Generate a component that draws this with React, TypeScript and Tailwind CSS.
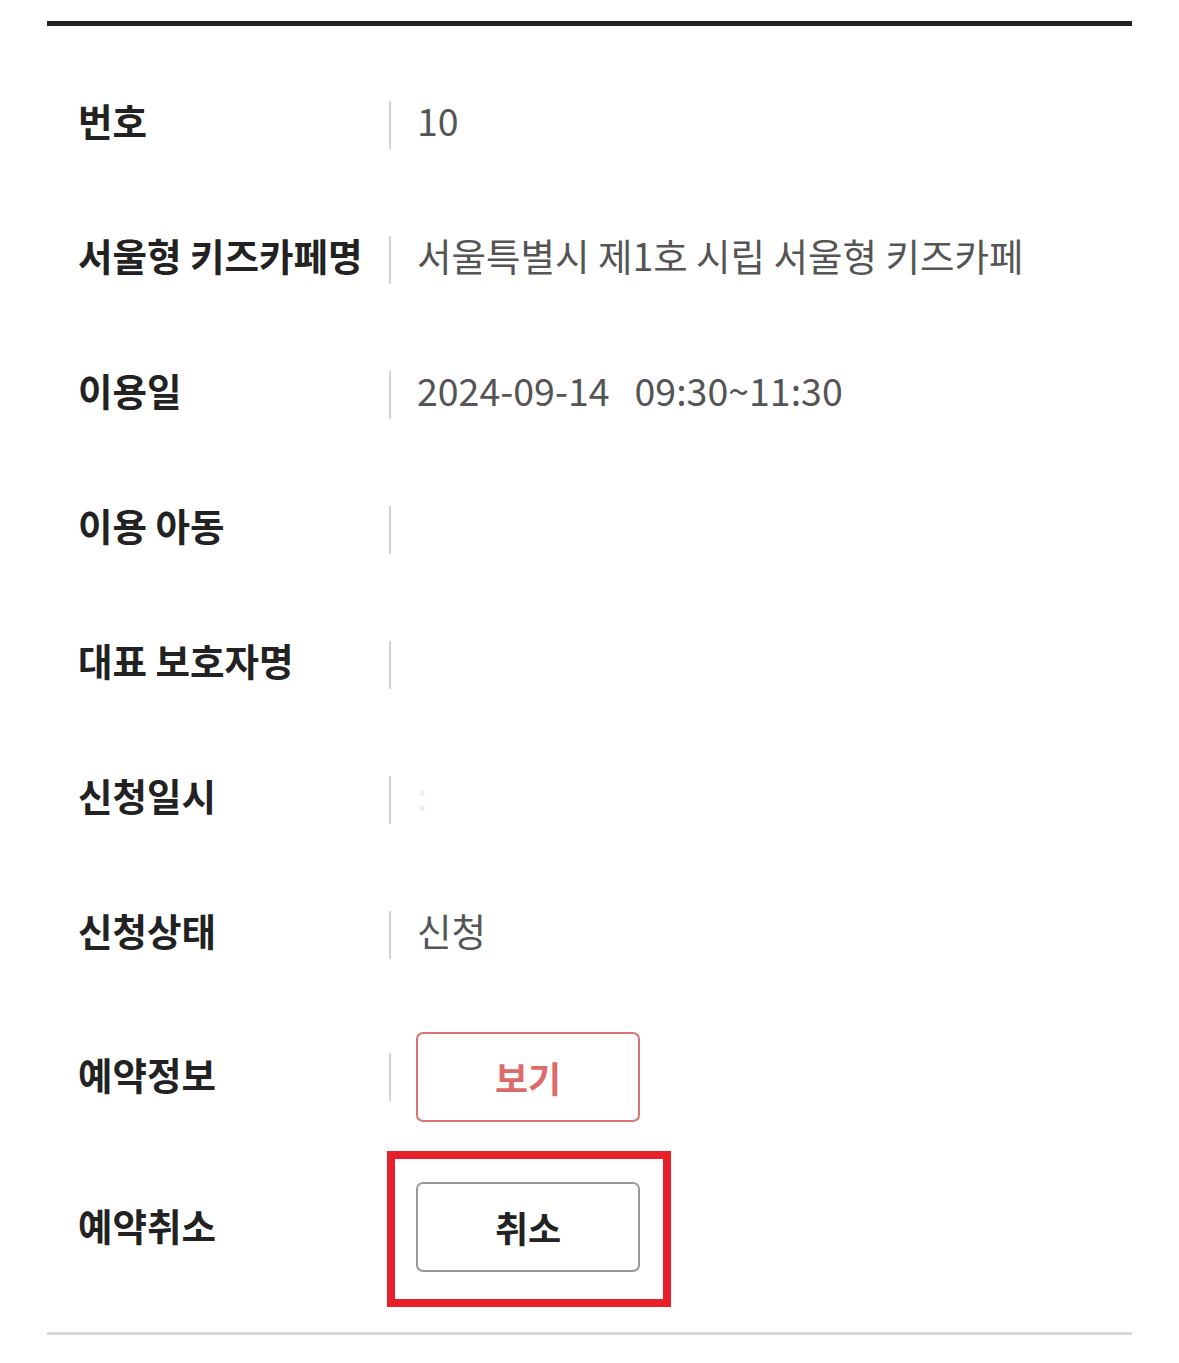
import React from 'react';

const rows: { label: string; value: React.ReactNode }[] = [
  { label: '번호', value: '10' },
  { label: '서울형 키즈카페명', value: '서울특별시 제1호 시립 서울형 키즈카페' },
  {
    label: '이용일',
    value: (
      <>
        2024-09-14<span className="ml-[25px]">09:30~11:30</span>
      </>
    ),
  },
  { label: '이용 아동', value: '' },
  { label: '대표 보호자명', value: '' },
  { label: '신청일시', value: <span className="text-[#eee]">:</span> },
  { label: '신청상태', value: '신청' },
];

function Divider() {
  return <div className="w-[2px] h-[48px] bg-[#d2d2d2] shrink-0" />;
}

export default function App() {
  return (
    <div
      className="bg-white min-h-[1363px] pt-[21px] px-[47px]"
      style={{ fontFamily: '"Noto Sans CJK KR", "Noto Sans", sans-serif' }}
    >
      <div className="border-t-[5px] border-[#222] pt-[31px]">
        {rows.map((r) => (
          <div key={r.label} className="flex items-center h-[135px]">
            <div className="w-[342px] pl-[31px] text-[37.5px] font-bold text-[#222] mt-[-8px] whitespace-nowrap">
              {r.label}
            </div>
            <Divider />
            <div className="pl-[26px] text-[37.5px] text-[#555] mt-[-8px] whitespace-nowrap">
              {r.value}
            </div>
          </div>
        ))}

        <div className="flex items-center h-[149px]">
          <div className="w-[342px] pl-[31px] text-[37.5px] font-bold text-[#222] mt-[-4px]">
            예약정보
          </div>
          <Divider />
          <div className="pl-[25px]">
            <button className="w-[224px] h-[90px] rounded-[7px] border-2 border-[#d97272] text-[36px] font-bold text-[#de6b6b] bg-white">
              보기
            </button>
          </div>
        </div>

        <div className="flex items-center h-[152px]">
          <div className="w-[342px] pl-[31px] text-[37.5px] font-bold text-[#222] mt-[-4px]">
            예약취소
          </div>
          <Divider />
          <div className="pl-[25px]">
            <div className="relative">
              <button className="w-[224px] h-[90px] rounded-[7px] border-2 border-[#999] text-[36px] font-bold text-[#222] bg-white">
                취소
              </button>
              <span className="absolute -left-[29px] -right-[31px] -top-[31px] -bottom-[35px] border-[8px] border-[#e8202a] pointer-events-none" />
            </div>
          </div>
        </div>

        <div className="mt-[29px] h-[3px] bg-[#d8d8d8]" />
      </div>
    </div>
  );
}
